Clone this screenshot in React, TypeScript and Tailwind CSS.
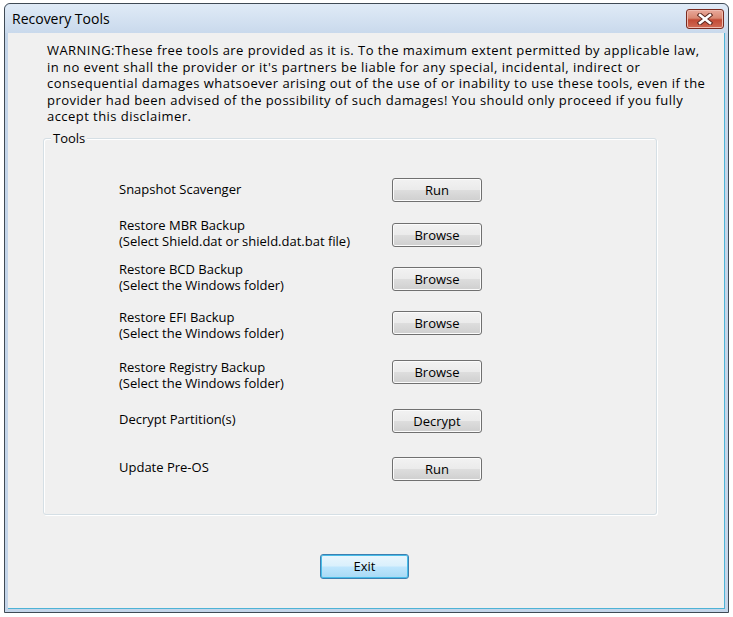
import React from 'react';

const rows = [
  { lines: ['Snapshot Scavenger'], button: 'Run', height: 'h-[40px]', labelPad: 'pt-[4px]', buttonPad: 'pt-0' },
  { lines: ['Restore MBR Backup', '(Select Shield.dat or shield.dat.bat file)'], button: 'Browse', height: 'h-[44px]', labelPad: 'pt-0', buttonPad: 'pt-[5px]' },
  { lines: ['Restore BCD Backup', '(Select the Windows folder)'], button: 'Browse', height: 'h-[48px]', labelPad: 'pt-0', buttonPad: 'pt-[5px]' },
  { lines: ['Restore EFI Backup', '(Select the Windows folder)'], button: 'Browse', height: 'h-[50px]', labelPad: 'pt-0', buttonPad: 'pt-[1px]' },
  { lines: ['Restore Registry Backup', '(Select the Windows folder)'], button: 'Browse', height: 'h-[49px]', labelPad: 'pt-0', buttonPad: 'pt-0' },
  { lines: ['Decrypt Partition(s)'], button: 'Decrypt', height: 'h-[48px]', labelPad: 'pt-[3px]', buttonPad: 'pt-0' },
  { lines: ['Update Pre-OS'], button: 'Run', height: 'h-[25px]', labelPad: 'pt-[3px]', buttonPad: 'pt-0' },
];

const warning = [
  'WARNING:These free tools are provided as it is. To the maximum extent permitted by applicable law,',
  "in no event shall the provider or it's partners be liable for any special, incidental, indirect or",
  'consequential damages whatsoever arising out of the use of or inability to use these tools, even if the',
  'provider had been advised of the possibility of such damages! You should only proceed if you fully',
  'accept this disclaimer.',
];

function WinButton({ label }: { label: string }) {
  return (
    <button className="w-[90px] h-[24px] rounded-[3px] border border-[#707070] bg-[linear-gradient(#f2f2f2_0%,#ebebeb_48%,#dddddd_52%,#cfcfcf_100%)] shadow-[inset_0_0_0_1px_#fbfbfb] text-[13px] text-black leading-none">
      {label}
    </button>
  );
}

function CloseButton() {
  return (
    <div className="w-[38px] h-[20px] rounded-[3px] border border-[#7a2a1f] bg-[linear-gradient(#e9a99b_0%,#d98872_45%,#c24a35_55%,#d06b55_100%)] shadow-[inset_0_0_0_1px_#eebbaf] flex items-center justify-center">
      <svg width="16" height="12" viewBox="0 0 16 12">
        <path d="M3 2 L13 10 M13 2 L3 10" stroke="#5e2a22" strokeWidth="4.6" strokeLinecap="square" />
        <path d="M3 2 L13 10 M13 2 L3 10" stroke="#ffffff" strokeWidth="2.6" strokeLinecap="square" />
      </svg>
    </div>
  );
}

export default function App() {
  return (
    <div className="w-[733px] h-[617px] bg-white pl-[4px] pt-[3px] font-['Open_Sans',sans-serif] text-black">
      <div className="w-[725px] h-[610px] rounded-t-[6px] border border-[#3f4a55] bg-[#c4d5e9] flex flex-col">
        {/* title bar */}
        <div className="h-[29px] shrink-0 rounded-t-[6px] bg-[linear-gradient(#e0ebf7,#c9d9ec)] flex items-center justify-between pl-[7px] pr-[4px]">
          <span className="text-[14px] text-black">Recovery Tools</span>
          <CloseButton />
        </div>

        {/* client area */}
        <div className="flex-1 mx-[3px] mb-[3px] border-r border-b border-[#4db3d6] bg-[#f0f0f0] flex flex-col">
          <div className="pl-[39px] pt-[9px] text-[13px] leading-[16.5px] tracking-[0.45px]">
            {warning.map((line, i) => (
              <div key={i} className="whitespace-nowrap">{line}</div>
            ))}
          </div>

          <div className="relative ml-[35px] mt-[13px] w-[614px] h-[377px] rounded-[3px] border border-[#d5dfe5] shadow-[inset_1px_1px_0_#ffffff,1px_1px_0_#ffffff]">
            <span className="absolute left-[7px] top-[-9px] px-[2px] bg-[#f0f0f0] text-[13px] leading-[16px]">Tools</span>
            <div className="pt-[38px] flex flex-col">
              {rows.map((row, i) => (
                <div key={i} className={`flex items-start ${row.height}`}>
                  <div className={`w-[348px] pl-[75px] text-[13px] leading-[16px] ${row.labelPad}`}>
                    {row.lines.map((l, j) => (
                      <div key={j} className="whitespace-nowrap">{l}</div>
                    ))}
                  </div>
                  <div className={row.buttonPad}>
                    <WinButton label={row.button} />
                  </div>
                </div>
              ))}
            </div>
          </div>

          <div className="mt-[38px] pl-[312px]">
            <button className="w-[89px] h-[25px] rounded-[3px] border border-[#3c7fb1] bg-[linear-gradient(#eaf6fd_0%,#d9f0fc_48%,#bee6fd_52%,#a7d9f5_100%)] shadow-[inset_0_0_0_1px_#48bde8] text-[13px] text-black leading-none">
              Exit
            </button>
          </div>
        </div>
      </div>
    </div>
  );
}
